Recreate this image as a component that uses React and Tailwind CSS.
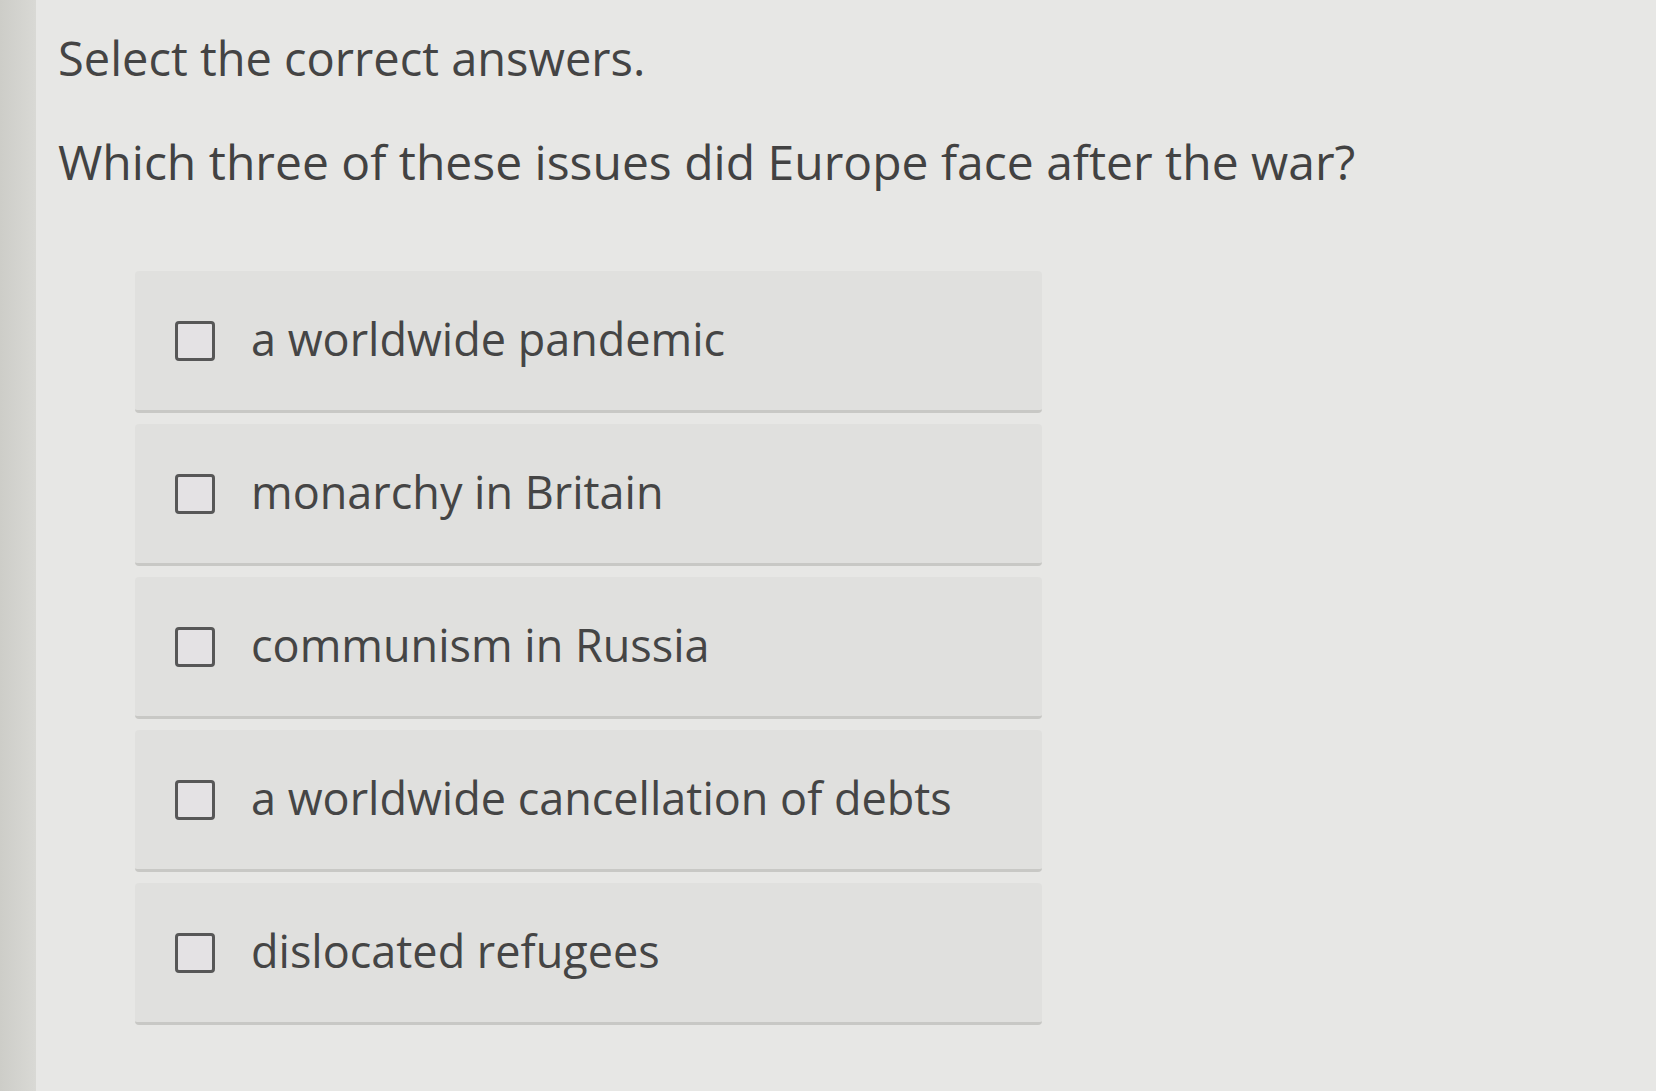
import { useState } from "react";

const options = [
  "a worldwide pandemic",
  "monarchy in Britain",
  "communism in Russia",
  "a worldwide cancellation of debts",
  "dislocated refugees",
];

function OptionRow({ label, checked, onToggle }) {
  return (
    <button
      type="button"
      onClick={onToggle}
      className="flex h-[142px] w-full items-center rounded-[4px] border-b-[3px] border-[#c8c8c5] bg-[#e0e0de] pl-[40px] text-left"
    >
      <span className="flex h-[40px] w-[40px] shrink-0 items-center justify-center rounded-[4px] border-[3px] border-[#575757] bg-[#e4e2e4]">
        {checked && <span className="h-[20px] w-[20px] bg-[#575757]" />}
      </span>
      <span className="ml-[36px] pb-[4px] text-[45px] text-[#454545]">{label}</span>
    </button>
  );
}

export default function App() {
  const [selected, setSelected] = useState([]);

  const toggle = (i) =>
    setSelected((s) => (s.includes(i) ? s.filter((x) => x !== i) : [...s, i]));

  return (
    <div
      className="flex min-h-[1091px] w-full bg-[#e7e7e5]"
      style={{ fontFamily: '"Open Sans", "Noto Sans", sans-serif' }}
    >
      {/* darker edge on the far left */}
      <div className="w-[36px] shrink-0 bg-gradient-to-r from-[#cdcdc8] to-[#d9d9d5]" />
      <div className="flex-1 pl-[22px] pt-[28px]">
        <h1 className="text-[47px] leading-[1.3] text-[#444444]">Select the correct answers.</h1>
        <p className="mt-[42px] text-[48px] leading-[1.3] text-[#424242]">
          Which three of these issues did Europe face after the war?
        </p>
        <div className="mt-[78px] ml-[77px] flex w-[907px] flex-col gap-[11px]">
          {options.map((opt, i) => (
            <OptionRow key={opt} label={opt} checked={selected.includes(i)} onToggle={() => toggle(i)} />
          ))}
        </div>
      </div>
    </div>
  );
}
